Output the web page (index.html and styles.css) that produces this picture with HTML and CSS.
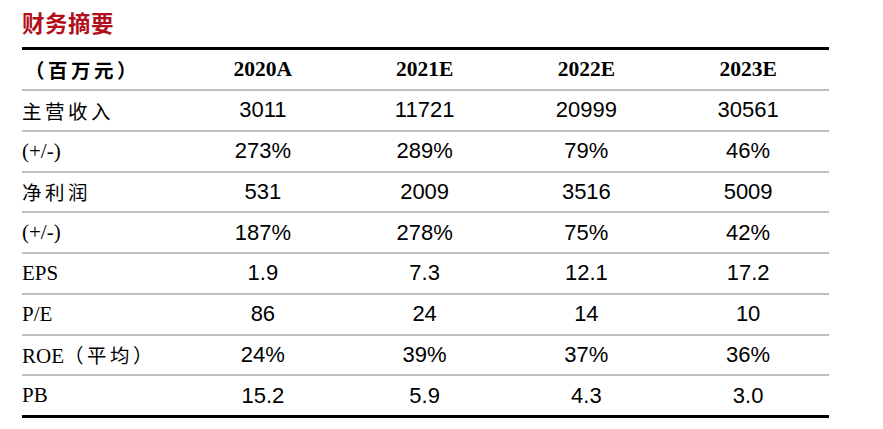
FILE: index.html
```html
<!DOCTYPE html>
<html lang="zh">
<head>
<meta charset="utf-8">
<link rel="stylesheet" href="styles.css">
</head>
<body>
<div class="wrap">
  <h1 class="title">财务摘要</h1>
  <div class="table">
    <div class="row head">
      <div class="label cjk-bold">（百万元）</div>
      <div class="num">2020A</div>
      <div class="num">2021E</div>
      <div class="num">2022E</div>
      <div class="num">2023E</div>
    </div>
    <div class="row">
      <div class="label cjk">主营收入</div>
      <div class="val">3011</div><div class="val">11721</div><div class="val">20999</div><div class="val">30561</div>
    </div>
    <div class="row">
      <div class="label">(+/-)</div>
      <div class="val">273%</div><div class="val">289%</div><div class="val">79%</div><div class="val">46%</div>
    </div>
    <div class="row">
      <div class="label cjk">净利润</div>
      <div class="val">531</div><div class="val">2009</div><div class="val">3516</div><div class="val">5009</div>
    </div>
    <div class="row">
      <div class="label">(+/-)</div>
      <div class="val">187%</div><div class="val">278%</div><div class="val">75%</div><div class="val">42%</div>
    </div>
    <div class="row">
      <div class="label">EPS</div>
      <div class="val">1.9</div><div class="val">7.3</div><div class="val">12.1</div><div class="val">17.2</div>
    </div>
    <div class="row">
      <div class="label">P/E</div>
      <div class="val">86</div><div class="val">24</div><div class="val">14</div><div class="val">10</div>
    </div>
    <div class="row">
      <div class="label">ROE<span class="cjk">（平均）</span></div>
      <div class="val">24%</div><div class="val">39%</div><div class="val">37%</div><div class="val">36%</div>
    </div>
    <div class="row last">
      <div class="label">PB</div>
      <div class="val">15.2</div><div class="val">5.9</div><div class="val">4.3</div><div class="val">3.0</div>
    </div>
  </div>
</div>
</body>
</html>
```

FILE: styles.css
```css
html, body {
  margin: 0;
  padding: 0;
  background: #fff;
}

.wrap {
  padding: 9px 0 0 22px;
  width: 807px;
}

.title {
  margin: 0 0 12px 0;
  height: 26px;
  line-height: 26px;
  font-family: "Noto Sans CJK SC", sans-serif;
  font-weight: 700;
  font-size: 22.5px;
  color: #b0101c;
  letter-spacing: 0.5px;
}

.table {
  border-top: 3px solid #000;
  border-bottom: 3px solid #000;
}

.row {
  display: grid;
  grid-template-columns: 160px repeat(4, 1fr);
  align-items: center;
  height: 38.75px;
  border-bottom: 2px solid #c0c0c0;
  font-family: "Liberation Sans", Arial, sans-serif;
  font-size: 22px;
  color: #000;
}

.row.head {
  height: 39px;
}

.row.last {
  border-bottom: none;
}

.label {
  font-family: "Liberation Serif", "Noto Sans CJK SC", serif;
  font-size: 21px;
  white-space: nowrap;
}

.cjk {
  font-family: "Noto Sans CJK SC", sans-serif;
  font-size: 19.5px;
  letter-spacing: 3.5px;
  font-weight: 400;
}

.cjk-bold {
  font-family: "Noto Sans CJK SC", sans-serif;
  font-size: 19.5px;
  font-weight: 700;
  letter-spacing: 3.5px;
  padding-left: 3px;
}

.num {
  text-align: center;
  font-family: "Liberation Serif", serif;
  font-weight: 700;
  font-size: 21.5px;
}

.val {
  text-align: center;
}
```
